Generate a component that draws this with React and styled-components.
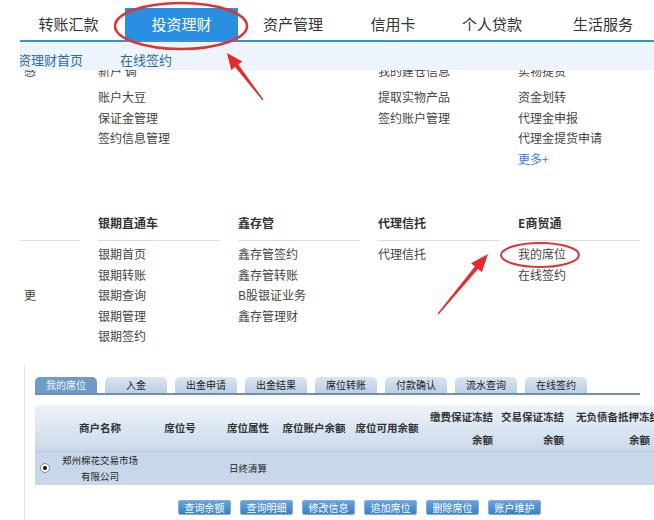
import React from "react";
import styled, { createGlobalStyle } from "styled-components";

const Global = createGlobalStyle`
  html, body { margin: 0; padding: 0; background: #fff; }
  body {
    font-family: "Noto Sans CJK SC", "Noto Sans", sans-serif;
    width: 654px;
    height: 520px;
    overflow: hidden;
  }
`;

const Page = styled.div`
  position: relative;
  width: 654px;
  height: 520px;
  overflow: hidden;
`;

const TopNav = styled.div`
  display: flex;
  height: 40px;
  padding-left: 12px;
`;

const NavItem = styled.div`
  width: ${(p) => p.w}px;
  flex: none;
  margin-top: 8px;
  height: 32px;
  line-height: 32px;
  text-align: center;
  font-size: 15px;
  color: ${(p) => (p.active ? "#fff" : "#333")};
  background: ${(p) => (p.active ? "#2b8fe1" : "transparent")};
`;

const Panel = styled.div`
  margin-left: 20px;
  border-top: 2px solid #3d8fd9;
  overflow: hidden;
`;

const SubBar = styled.div`
  height: 20px;
  padding-top: 8px;
  background: #eef4fb;
  display: flex;
  gap: 37px;
  margin-left: -15px;
`;

const SubLink = styled.span`
  font-size: 13px;
  line-height: 20px;
  color: #2d6aa8;
`;

const ClipBox = styled.div`
  height: 10px;
  overflow: hidden;
`;

const MenuRow = styled.div`
  display: grid;
  grid-template-columns: 78px 140px 140px 140px 140px;
  font-size: 12px;
  line-height: 20.6px;
  color: #444;
  white-space: nowrap;
  margin-top: ${(p) => p.mt || 0}px;
`;

const Cell = styled.div`
  padding-left: ${(p) => (p.lead ? 4 : 0)}px;
  color: ${(p) => (p.link ? "#2f7fd0" : "#444")};
`;

const HeadCell = styled.div`
  margin-right: 18px;
  padding-bottom: 6px;
  border-bottom: 1px solid #dedede;
  font-weight: bold;
  color: #333;
`;

const Block = styled.div`
  margin-top: ${(p) => p.mt}px;
`;

const Lower = styled.div`
  margin: 18px 0 0 4px;
  border-left: 1px solid #e2e2e2;
  padding: 12px 0 20px 10px;
`;

const Tabs = styled.div`
  display: flex;
  gap: 8px;
  width: 605px;
  border-bottom: 2px solid #6f90b3;
`;

const Tab = styled.div`
  width: 62px;
  height: 16px;
  line-height: 16px;
  font-size: 10px;
  text-align: center;
  border-radius: 5px 5px 0 0;
  color: ${(p) => (p.active ? "#eef5fc" : "#222")};
  background: ${(p) =>
    p.active ? "#6f9bc8" : "linear-gradient(#d8e5f2, #bccfe3)"};
`;

const Table = styled.div`
  margin-top: 10px;
  width: 640px;
`;

const cols = "25px 80px 80px 56px 76px 70px 73px 71px 86px";

const HeadRow = styled.div`
  display: grid;
  grid-template-columns: ${cols};
  height: 46px;
  background: linear-gradient(#eef3f9, #c9d9eb);
`;

const Th = styled.div`
  display: flex;
  flex-direction: column;
  justify-content: center;
  align-items: ${(p) => (p.right ? "flex-end" : "center")};
  padding-right: ${(p) => (p.right ? 2 : 0)}px;
  font-size: 10.5px;
  font-weight: bold;
  line-height: 23px;
  color: #333;
  white-space: nowrap;
`;

const ThSplit = styled.div`
  display: flex;
  flex-direction: column;
  justify-content: center;
  padding-left: 10px;
  font-size: 10.5px;
  font-weight: bold;
  line-height: 23px;
  color: #333;
  white-space: nowrap;
  & > span:last-child {
    text-align: right;
    padding-right: 2px;
  }
`;

const DataRow = styled.div`
  display: grid;
  grid-template-columns: ${cols};
  height: 33px;
  background: #c8d8ea;
  border-top: 1px solid #b8cbe0;
`;

const Td = styled.div`
  display: flex;
  flex-direction: column;
  justify-content: center;
  align-items: ${(p) => (p.start ? "flex-start" : "center")};
  padding-left: ${(p) => (p.start ? 5 : 0)}px;
  font-size: 9.5px;
  line-height: 16px;
  color: #222;
  white-space: nowrap;
`;

const Radio = styled.span`
  width: 8px;
  height: 8px;
  border-radius: 50%;
  border: 1px solid #888;
  background: #fff;
  display: flex;
  align-items: center;
  justify-content: center;
  &::after {
    content: "";
    width: 4px;
    height: 4px;
    border-radius: 50%;
    background: #111;
  }
`;

const ButtonRow = styled.div`
  display: flex;
  gap: 9px;
  margin-top: 15px;
  padding-left: 143px;
`;

const Button = styled.div`
  width: 53px;
  height: 15px;
  box-sizing: border-box;
  border: 1px solid #7fb0e0;
  border-radius: 2px;
  background: linear-gradient(#66a3de, #3b7fc4);
  color: #fff;
  font-size: 10px;
  line-height: 13px;
  text-align: center;
`;

const Overlay = styled.svg`
  position: absolute;
  left: 0;
  top: 0;
  pointer-events: none;
`;

function arrowPoints(sx, sy, tx, ty, head) {
  const dx = tx - sx;
  const dy = ty - sy;
  const len = Math.hypot(dx, dy);
  const ux = dx / len;
  const uy = dy / len;
  const nx = -uy;
  const ny = ux;
  const bx = tx - head * ux;
  const by = ty - head * uy;
  const p = (x, y) => `${x.toFixed(1)},${y.toFixed(1)}`;
  return [
    p(sx + 0.6 * nx, sy + 0.6 * ny),
    p(bx + 2 * nx, by + 2 * ny),
    p(bx + 7 * nx, by + 7 * ny),
    p(tx, ty),
    p(bx - 7 * nx, by - 7 * ny),
    p(bx - 2 * nx, by - 2 * ny),
    p(sx - 0.6 * nx, sy - 0.6 * ny),
  ].join(" ");
}

const navs = [
  ["转账汇款", 113],
  ["投资理财", 113, true],
  ["资产管理", 110],
  ["信用卡", 90],
  ["个人贷款", 108],
  ["生活服务", 114],
];

const block1 = [
  ["", "账户大豆", "", "提取实物产品", "资金划转"],
  ["", "保证金管理", "", "签约账户管理", "代理金申报"],
  ["", "签约信息管理", "", "", "代理金提货申请"],
  ["", "", "", "", "更多+"],
];

const block2 = [
  ["", "银期首页", "鑫存管签约", "代理信托", "我的席位"],
  ["", "银期转账", "鑫存管转账", "", "在线签约"],
  ["更", "银期查询", "B股银证业务", "", ""],
  ["", "银期管理", "鑫存管理财", "", ""],
  ["", "银期签约", "", "", ""],
];

const tabs = ["我的席位", "入金", "出金申请", "出金结果", "席位转账", "付款确认", "流水查询", "在线签约"];
const buttons = ["查询余额", "查询明细", "修改信息", "追加席位", "删除席位", "账户维护"];

function Row({ cells, mt }) {
  return (
    <MenuRow mt={mt}>
      {cells.map((c, i) => (
        <Cell key={i} lead={i === 0} link={c === "更多+"}>
          {c}
        </Cell>
      ))}
    </MenuRow>
  );
}

export default function App() {
  return (
    <Page>
      <Global />
      <TopNav>
        {navs.map(([t, w, a]) => (
          <NavItem key={t} w={w} active={a}>
            {t}
          </NavItem>
        ))}
      </TopNav>
      <Panel>
        <SubBar>
          <SubLink>投资理财首页</SubLink>
          <SubLink>在线签约</SubLink>
        </SubBar>
        <ClipBox>
          <Row mt={-9} cells={["感", "新户 调", "", "我的建仓信息", "实物提货"]} />
        </ClipBox>
        <Block mt={7}>
          {block1.map((r, i) => (
            <Row key={i} cells={r} />
          ))}
        </Block>
        <Block mt={44}>
          <MenuRow>
            <HeadCell />
            <HeadCell>银期直通车</HeadCell>
            <HeadCell>鑫存管</HeadCell>
            <HeadCell>代理信托</HeadCell>
            <HeadCell>E商贸通</HeadCell>
          </MenuRow>
          <Row mt={3} cells={block2[0]} />
          {block2.slice(1).map((r, i) => (
            <Row key={i} cells={r} />
          ))}
        </Block>
        <Lower>
          <Tabs>
            {tabs.map((t, i) => (
              <Tab key={t} active={i === 0}>
                {t}
              </Tab>
            ))}
          </Tabs>
          <Table>
            <HeadRow>
              <Th />
              <Th>商户名称</Th>
              <Th>席位号</Th>
              <Th>席位属性</Th>
              <Th>席位账户余额</Th>
              <Th>席位可用余额</Th>
              <Th right>
                <span>缴费保证冻结</span>
                <span>余额</span>
              </Th>
              <Th right>
                <span>交易保证冻结</span>
                <span>余额</span>
              </Th>
              <ThSplit>
                <span>无负债备抵押冻结</span>
                <span>余额</span>
              </ThSplit>
            </HeadRow>
            <DataRow>
              <Td start>
                <Radio />
              </Td>
              <Td>
                <span>郑州棉花交易市场</span>
                <span>有限公司</span>
              </Td>
              <Td />
              <Td>日终清算</Td>
              <Td />
              <Td />
              <Td />
              <Td />
              <Td />
            </DataRow>
          </Table>
          <ButtonRow>
            {buttons.map((b) => (
              <Button key={b}>{b}</Button>
            ))}
          </ButtonRow>
        </Lower>
      </Panel>
      <Overlay width="654" height="520" viewBox="0 0 654 520">
        <ellipse cx="181" cy="26" rx="66" ry="23" fill="none" stroke="#dc3535" strokeWidth="2.5" />
        <polygon points={arrowPoints(263, 100, 227, 53, 16)} fill="#e52b2b" />
        <ellipse cx="540" cy="255" rx="39" ry="12" fill="none" stroke="#dc3535" strokeWidth="2" />
        <polygon points={arrowPoints(438, 314, 488, 254, 18)} fill="#e52b2b" />
      </Overlay>
    </Page>
  );
}
